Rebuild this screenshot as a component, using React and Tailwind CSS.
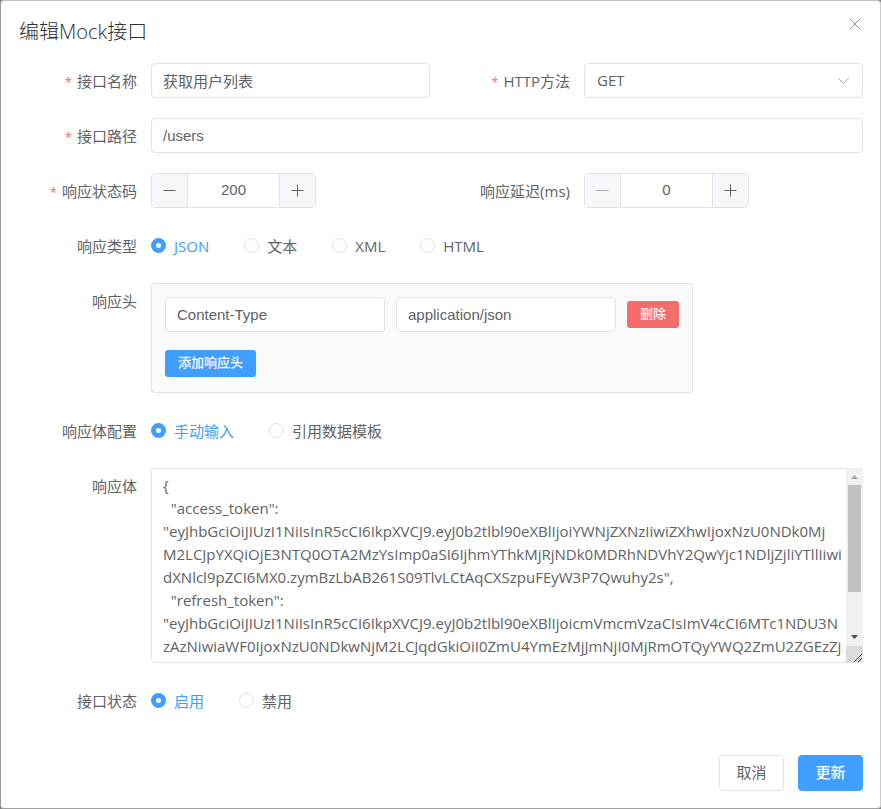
import { useState } from "react";

const initialBody = `{
  "access_token":
"eyJhbGciOiJIUzI1NiIsInR5cCI6IkpXVCJ9.eyJ0b2tlbl90eXBlIjoiYWNjZXNzIiwiZXhwIjoxNzU0NDk0Mj
M2LCJpYXQiOjE3NTQ0OTA2MzYsImp0aSI6IjhmYThkMjRjNDk0MDRhNDVhY2QwYjc1NDljZjliYTllIiwi
dXNlcl9pZCI6MX0.zymBzLbAB261S09TlvLCtAqCXSzpuFEyW3P7Qwuhy2s",
  "refresh_token":
"eyJhbGciOiJIUzI1NiIsInR5cCI6IkpXVCJ9.eyJ0b2tlbl90eXBlIjoicmVmcmVzaCIsImV4cCI6MTc1NDU3N
zAzNiwiaWF0IjoxNzU0NDkwNjM2LCJqdGkiOiI0ZmU4YmEzMjJmNjI0MjRmOTQyYWQ2ZmU2ZGEzZj
",
  "user_id": 1
}`;

const inputClass =
  "h-[35px] w-full min-w-0 rounded border border-[#e0e3ea] bg-white px-[11px] font-['Liberation_Sans','Noto_Sans_CJK_SC',sans-serif] text-[#606266] outline-none focus:border-[#409eff]";

function Field({ label, htmlFor, required, group, children }) {
  const content = (
    <>
      {required && <span className="mr-[5px] text-[13px] text-[#f56c6c]">*</span>}
      {label}
    </>
  );
  const labelClass =
    "h-[35px] w-[132px] shrink-0 pr-[14px] text-right leading-[37px] whitespace-nowrap";
  return (
    <div
      className="flex items-start"
      role={group ? "group" : undefined}
      aria-labelledby={group ? htmlFor : undefined}
    >
      {group ? (
        <span id={htmlFor} className={labelClass}>
          {content}
        </span>
      ) : (
        <label htmlFor={htmlFor} className={labelClass}>
          {content}
        </label>
      )}
      <div className="min-w-0 flex-1">{children}</div>
    </div>
  );
}

function MinusIcon() {
  return (
    <svg width="13" height="13" viewBox="0 0 13 13" stroke="currentColor" aria-hidden="true">
      <path d="M.5 6.500h12" />
    </svg>
  );
}

function PlusIcon() {
  return (
    <svg width="13" height="13" viewBox="0 0 13 13" stroke="currentColor" aria-hidden="true">
      <path d="M.5 6.500h12M6.500.5v12" />
    </svg>
  );
}

function NumberField({ id, value, onChange, min }) {
  const stepClass =
    "flex w-[35px] shrink-0 items-center justify-center bg-[#f5f7fa] text-[#606266] disabled:text-[#a8abb2]";
  return (
    <div className="flex h-[35px] w-[165px] overflow-hidden rounded border border-[#e0e3ea]">
      <button
        type="button"
        aria-label="减少"
        disabled={value <= min}
        onClick={() => onChange(value - 1)}
        className={stepClass}
      >
        <MinusIcon />
      </button>
      <input
        id={id}
        type="number"
        value={value}
        onChange={(e) => onChange(Number(e.target.value))}
        className="w-full min-w-0 appearance-none border-x border-[#e0e3ea] bg-white text-center font-['Liberation_Sans',sans-serif] outline-none [-moz-appearance:textfield] [&::-webkit-inner-spin-button]:appearance-none"
      />
      <button
        type="button"
        aria-label="增加"
        onClick={() => onChange(value + 1)}
        className={stepClass}
      >
        <PlusIcon />
      </button>
    </div>
  );
}

function RadioGroup({ name, options, value, onChange }) {
  return (
    <div className="flex h-[35px] items-center gap-[35px]">
      {options.map((option) => (
        <label
          key={option}
          className="flex cursor-pointer items-center gap-2 has-checked:text-[#409eff]"
        >
          <input
            type="radio"
            name={name}
            checked={value === option}
            onChange={() => onChange(option)}
            className="size-[15px] shrink-0 appearance-none rounded-full border border-[#dcdfe6] bg-white checked:border-[5px] checked:border-[#409eff]"
          />
          <span className="pt-px">{option}</span>
        </label>
      ))}
    </div>
  );
}

function ScrollRail() {
  return (
    <div
      aria-hidden="true"
      className="pointer-events-none absolute inset-y-0 right-0 flex w-[17px] flex-col overflow-hidden rounded-r-sm bg-[#f1f1f1]"
    >
      <svg width="17" height="17" viewBox="0 0 17 17" fill="#a3a3a3">
        <path d="M5 11h7L8.500 7z" />
      </svg>
      <div className="mx-0.5 h-[107px] bg-[#c1c1c1]" />
      <svg className="mt-auto" width="17" height="17" viewBox="0 0 17 17" fill="#505050">
        <path d="M5 6h7L8.500 10z" />
      </svg>
      <svg width="17" height="17" viewBox="0 0 17 17" fill="none" stroke="#505050">
        <path d="M0 0h17v17H0z" fill="#dcdcdc" stroke="none" />
        <path d="M8 16l8-8M12 16l4-4" />
      </svg>
    </div>
  );
}

export default function App() {
  const [status, setStatus] = useState(200);
  const [delay, setDelay] = useState(0);
  const [type, setType] = useState("JSON");
  const [source, setSource] = useState("手动输入");
  const [state, setState] = useState("启用");

  return (
    <div className="min-h-screen bg-[#808080] font-['Open_Sans','Noto_Sans_CJK_SC',sans-serif] text-[15px] text-[#606266]">
      <div
        role="dialog"
        aria-labelledby="dialog-title"
        className="flex min-h-screen flex-col rounded border border-t-[#c0c0c0] border-r-[#cccccc] border-b-[#a0a0a0] border-l-[#999999] bg-white pr-[17px] pb-[17px] pl-[18px]"
      >
        <header className="flex items-start justify-between pt-[15px]">
          <h2 id="dialog-title" className="text-[20px] leading-[31px] font-light text-[#303133]">
            编辑Mock接口
          </h2>
          <button type="button" aria-label="关闭" className="p-px text-[#909399]">
            <svg width="14" height="14" viewBox="0 0 14 14" fill="none" stroke="currentColor" aria-hidden="true">
              <path d="M1.5 1.5l11 11M12.5 1.5l-11 11" />
            </svg>
          </button>
        </header>

        <form className="flex flex-1 flex-col pt-4" onSubmit={(e) => e.preventDefault()}>
          <div className="flex flex-col gap-5">
            <div className="grid grid-cols-2 gap-x-[22px]">
              <Field label="接口名称" htmlFor="name" required>
                <input id="name" type="text" defaultValue="获取用户列表" className={inputClass} />
              </Field>
              <Field label="HTTP方法" htmlFor="method" required>
                <div className="relative">
                  <select
                    id="method"
                    defaultValue="GET"
                    className="h-[35px] w-full appearance-none rounded border border-[#e0e3ea] bg-white px-3 outline-none"
                  >
                    <option>GET</option>
                    <option>POST</option>
                    <option>PUT</option>
                    <option>DELETE</option>
                  </select>
                  <svg
                    className="pointer-events-none absolute top-2.5 right-3 text-[#a8abb2]"
                    width="15"
                    height="15"
                    viewBox="0 0 15 15"
                    fill="none"
                    stroke="currentColor"
                    aria-hidden="true"
                  >
                    <path d="M2 5l5.500 5.500L13 5" />
                  </svg>
                </div>
              </Field>
            </div>

            <Field label="接口路径" htmlFor="path" required>
              <input id="path" type="text" defaultValue="/users" className={inputClass} />
            </Field>

            <div className="grid grid-cols-2 gap-x-[22px]">
              <Field label="响应状态码" htmlFor="status" required>
                <NumberField id="status" value={status} onChange={setStatus} min={100} />
              </Field>
              <Field label="响应延迟(ms)" htmlFor="delay">
                <NumberField id="delay" value={delay} onChange={setDelay} min={0} />
              </Field>
            </div>

            <Field label="响应类型" htmlFor="type-label" group>
              <RadioGroup
                name="type"
                options={["JSON", "文本", "XML", "HTML"]}
                value={type}
                onChange={setType}
              />
            </Field>

            <Field label="响应头" htmlFor="headers-label" group>
              <div className="w-fit max-w-full rounded border border-[#e0e3ea] bg-[#fafafa] px-[13px] pt-[13px] pb-[15px]">
                <div className="flex items-center gap-[11px]">
                  <div className="w-[220px]">
                    <input type="text" aria-label="名称" defaultValue="Content-Type" className={inputClass} />
                  </div>
                  <div className="w-[220px]">
                    <input type="text" aria-label="值" defaultValue="application/json" className={inputClass} />
                  </div>
                  <button
                    type="button"
                    className="h-[27px] rounded-[3px] bg-[#f56c6c] px-[13px] pb-0.5 text-[13px] font-medium text-white"
                  >
                    删除
                  </button>
                </div>
                <button
                  type="button"
                  className="mt-[18px] block h-[27px] rounded-[3px] bg-[#409eff] px-[13px] pb-0.5 text-[13px] font-medium text-white"
                >
                  添加响应头
                </button>
              </div>
            </Field>

            <Field label="响应体配置" htmlFor="source-label" group>
              <RadioGroup
                name="source"
                options={["手动输入", "引用数据模板"]}
                value={source}
                onChange={setSource}
              />
            </Field>

            <Field label="响应体" htmlFor="body">
              <div className="relative">
                <textarea
                  id="body"
                  defaultValue={initialBody}
                  className="block h-[195px] w-full resize-none overflow-x-hidden overflow-y-scroll rounded border border-[#e0e3ea] bg-white py-[5px] pl-[11px] leading-[23px] whitespace-pre outline-none"
                />
                <ScrollRail />
              </div>
            </Field>

            <Field label="接口状态" htmlFor="state-label" group>
              <RadioGroup
                name="state"
                options={["启用", "禁用"]}
                value={state}
                onChange={setState}
              />
            </Field>
          </div>

          <footer className="mt-auto flex justify-end gap-3.5 pt-8">
            <button
              type="button"
              className="h-9 min-w-[65px] rounded border border-[#e0e3ea] bg-white px-4 pb-0.5"
            >
              取消
            </button>
            <button
              type="submit"
              className="h-9 min-w-[65px] rounded border border-[#409eff] bg-[#409eff] px-4 pb-0.5 font-medium text-white"
            >
              更新
            </button>
          </footer>
        </form>
      </div>
    </div>
  );
}
